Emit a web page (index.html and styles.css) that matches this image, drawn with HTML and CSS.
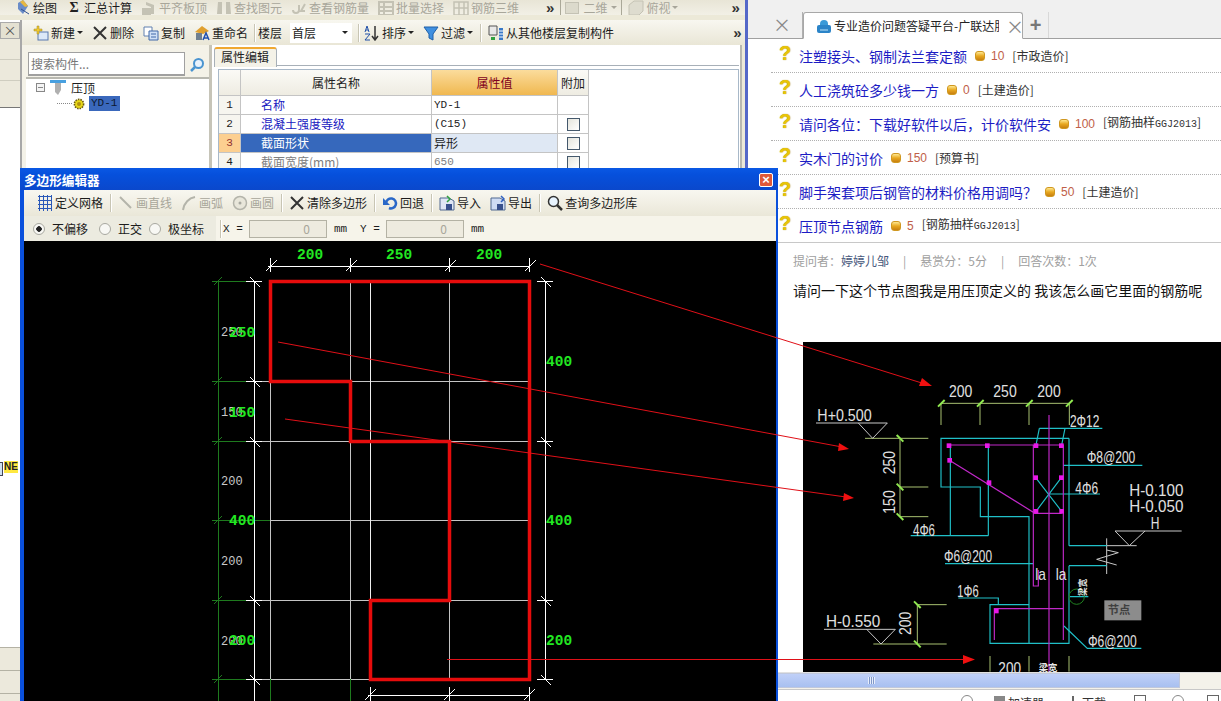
FILE: index.html
```html
<!DOCTYPE html>
<html lang="zh">
<head>
<meta charset="utf-8">
<title>多边形编辑器</title>
<link rel="stylesheet" href="styles.css">
</head>
<body>
<div class="screen">

<section class="app">
  <div class="bar top-bar">
    <span class="tool"><svg class="ico" viewBox="0 0 16 16"><path d="M3 3l5-3 5 6-5 8-5-5z" fill="#6a8cc8"/><path d="M8 0l5 6-3 1-5-5z" fill="#e8b840"/><path d="M6 9l8 5" stroke="#305090"/></svg>绘图</span>
    <span class="tool"><span class="sigma">Σ</span>汇总计算</span>
    <span class="tool off"><svg class="ico" viewBox="0 0 16 16"><path d="M1 8h9v7H1zM5 2l8 3v9h-3V7L5 5z" fill="#c4c2b4"/></svg>平齐板顶</span>
    <span class="tool off"><svg class="ico" viewBox="0 0 16 16"><path d="M2 2h4v12H1zM10 2h4l1 12h-5z" fill="#c4c2b4"/></svg>查找图元</span>
    <span class="tool off"><svg class="ico" viewBox="0 0 16 16"><path d="M2 10a3 3 0 1 0 6 0M8 10V5M14 4l-4 7h4" fill="none" stroke="#c4c2b4" stroke-width="2"/></svg>查看钢筋量</span>
    <span class="tool off"><svg class="ico" viewBox="0 0 16 16"><path d="M1 2h14v13H1zM1 7h14M1 11h14M6 2v13" fill="none" stroke="#c4c2b4" stroke-width="2"/></svg>批量选择</span>
    <span class="tool off"><svg class="ico" viewBox="0 0 16 16"><path d="M1 2h14v13H1zM1 8h14M6 2v13M11 2v13" fill="none" stroke="#c4c2b4" stroke-width="1.500"/></svg>钢筋三维</span>
    <span class="more more-a">»</span>
    <span class="view-combo"><i class="swatch"></i>二维<i class="caret off-caret"></i></span>
    <span class="tool off view-tool"><svg class="ico" viewBox="0 0 16 16"><path d="M1 5l5-4h9v10l-4 4H1z" fill="#dedccf" stroke="#c4c2b4"/></svg>俯视<i class="caret off-caret"></i></span>
    <span class="more more-b">»</span>
  </div>
  <div class="app-body">
    <aside class="dock">
      <div class="dock-head"><span>×</span></div>
      <div class="dock-band"></div>
      <div class="dock-band"></div>
      <div class="dock-band tall"></div>
      <div class="dock-white"><span class="ne-box"></span><span class="ne">NE</span></div>
      <div class="dock-foot"></div>
      <div class="dock-foot"></div>
      <div class="dock-foot short"></div>
    </aside>
    <div class="work">
      <div class="bar cmd-bar">
        <span class="tool"><svg class="ico" viewBox="0 0 16 16"><rect x="5" y="7" width="10" height="8" fill="#dce8f8" stroke="#5878b0"/><path d="M1 4h3V1h2v3h3v2H6v3H4V6H1z" fill="#f0c830" stroke="#a08820" stroke-width=".5"/></svg>新建<i class="caret"></i></span>
        <span class="tool"><svg class="ico" viewBox="0 0 16 16"><path d="M2 2l12 12M14 2L2 14" stroke="#333" stroke-width="2"/></svg>删除</span>
        <span class="tool"><svg class="ico" viewBox="0 0 16 16"><path d="M1 2h8v9H1z" fill="#fff" stroke="#6080b0"/><path d="M6 6h9v9H6z" fill="#cfe0f6" stroke="#4068a8"/><path d="M8 9h5M8 12h5" stroke="#4068a8"/></svg>复制</span>
        <span class="tool"><svg class="ico" viewBox="0 0 16 16"><path d="M1 7l7-6 7 5-6 3z" fill="#e0a030"/><path d="M2 8h6v7H2z" fill="#708090"/><path d="M9 15l3-7 3 7M10 13h4" fill="none" stroke="#2050b0" stroke-width="1.500"/></svg>重命名</span>
        <i class="sep before-label"></i>
        <span class="label">楼层</span>
        <span class="floor">首层<i class="caret"></i></span>
        <i class="sep tight"></i>
        <span class="tool"><svg class="ico" viewBox="0 0 16 16"><path d="M1 7l2-6 2 6M2 5h2M1 9h5l-5 6h5" fill="none" stroke="#2050a8"/><path d="M11 1v13M8 11l3 4 3-4" fill="none" stroke="#333" stroke-width="1.500"/></svg>排序<i class="caret"></i></span>
        <span class="tool"><svg class="ico" viewBox="0 0 16 16"><path d="M1 2h14l-5 7v6l-4-2V9z" fill="#4090e0" stroke="#2060a8"/></svg>过滤<i class="caret"></i></span>
        <i class="sep"></i>
        <span class="tool"><svg class="ico" viewBox="0 0 16 16"><path d="M1 1h8v9H1z" fill="#e8e8e8" stroke="#555"/><path d="M3 12h4v3H3z" fill="#30a040"/><path d="M11 3h4v12h-4z" fill="#3878c8"/><path d="M11 6h4M11 9h4M11 12h4" stroke="#fff"/></svg>从其他楼层复制构件</span>
        <span class="more more-c">»</span>
      </div>
      <div class="panes">
        <div class="comp">
          <div class="search">
            <span class="search-input">搜索构件...</span>
            <span class="search-btn"><svg class="ico" viewBox="0 0 16 16"><circle cx="9.500" cy="6.500" r="4.500" fill="#e8f2fc" stroke="#4a94d0" stroke-width="2"/><path d="M6 10l-4 4" stroke="#4a94d0" stroke-width="2.500"/></svg></span>
          </div>
          <div class="tree">
            <div class="tree-row root">
              <span class="minus"></span>
              <svg class="ico" viewBox="0 0 16 16"><path d="M0 0h16v3H0z" fill="#48a0e0"/><path d="M5 3h6v7l-3 5-3-3z" fill="#b0b0b0"/></svg>
              <span>压顶</span>
            </div>
            <div class="tree-row leaf">
              <i class="dots"></i>
              <svg class="gear" viewBox="0 0 12 12"><circle cx="6" cy="6" r="4.600" fill="#e8d818" stroke="#6a5a10" stroke-width="1.600" stroke-dasharray="1.500 1"/><circle cx="6" cy="6" r="2" fill="#b09010"/></svg>
              <span class="picked">YD-1</span>
            </div>
          </div>
        </div>
        <div class="props">
          <div class="prop-tabs"><span class="prop-tab">属性编辑</span></div>
          <div class="prop-frame">
            <div class="grid">
              <div class="c head"></div><div class="c head name-h">属性名称</div><div class="c head value-h">属性值</div><div class="c head">附加</div>
              <div class="c num">1</div><div class="c name">名称</div><div class="c mono">YD-1</div><div class="c"></div>
              <div class="c num">2</div><div class="c name">混凝土强度等级</div><div class="c mono">(C15)</div><div class="c"><i class="check"></i></div>
              <div class="c num cur">3</div><div class="c name sel">截面形状</div><div class="c val-sel">异形</div><div class="c"><i class="check"></i></div>
              <div class="c num">4</div><div class="c name dim">截面宽度(mm)</div><div class="c mono dim">650</div><div class="c"><i class="check"></i></div>
            </div>
          </div>
        </div>
      </div>
    </div>
  </div>
</section>

<section class="browser">
  <div class="tab-top"></div>
  <div class="tabs">
    <span class="tab-off">×</span>
    <span class="tab-on">
      <svg class="fav" viewBox="0 0 16 16"><path d="M4 6a4 4 0 0 1 8 0v1H4z" fill="#3a9ad8"/><rect x="1" y="7" width="14" height="8" rx="2" fill="#2b84c8"/><path d="M4 12h8" stroke="#bfe4f8"/></svg>
      <span class="tab-title">专业造价问题答疑平台-广联达服务新干线</span>
      <span class="tab-x">×</span>
    </span>
    <span class="tab-plus">+</span>
  </div>
  <div class="qlist">
    <div class="q"><i class="qm">?</i><a class="qt">注塑接头、钢制法兰套定额</a><i class="coin"></i><span class="pts">10</span><span class="cat">[市政造价]</span></div>
    <div class="q"><i class="qm">?</i><a class="qt">人工浇筑砼多少钱一方</a><i class="coin"></i><span class="pts">0</span><span class="cat">[土建造价]</span></div>
    <div class="q"><i class="qm">?</i><a class="qt">请问各位：下载好软件以后，计价软件安</a><i class="coin"></i><span class="pts">100</span><span class="cat">[钢筋抽样<span class="latin">GGJ2013</span>]</span></div>
    <div class="q"><i class="qm">?</i><a class="qt">实木门的讨价</a><i class="coin"></i><span class="pts">150</span><span class="cat">[预算书]</span></div>
    <div class="q"><i class="qm">?</i><a class="qt">脚手架套项后钢管的材料价格用调吗？</a><i class="coin"></i><span class="pts">50</span><span class="cat">[土建造价]</span></div>
    <div class="q last"><i class="qm">?</i><a class="qt">压顶节点钢筋</a><i class="coin"></i><span class="pts">5</span><span class="cat">[钢筋抽样<span class="latin">GGJ2013</span>]</span></div>
  </div>
  <div class="meta">提问者：<b>婷婷儿邹</b><i>|</i>悬赏分：5分<i>|</i>回答次数：1次</div>
  <p class="question">请问一下这个节点图我是用压顶定义的 我该怎么画它里面的钢筋呢</p>
  <svg class="node" viewBox="9 -84 1254 990" font-family="Liberation Sans, sans-serif">
    <rect x="9" y="-84" width="1254" height="990" fill="#000"/>
    <g fill="none" stroke="#a8c070" stroke-width="3">
      <path d="M423 100H808M423 100v65M540 100v65M687 100v65M808 100v65"/>
      <path d="M195 205H385M300 205V440M300 351H385M300 440H385"/>
      <path d="M352 704V822M352 704H440M220 822H440"/>
      <path d="M570 858V905M687 858V905M807 858V905"/>
    </g>
    <g stroke="#90e850" stroke-width="6">
      <path d="M414 110L434 90M531 110L551 90M678 110L698 90M798 110L818 90"/>
      <path d="M290 195L310 215M290 341L310 361M290 430L310 450M342 694L362 714M342 812L362 832"/>
    </g>
    <g fill="none" stroke="#c8c8c8" stroke-width="3">
      <path d="M48 159H262L218 205L175 159M72 778H286L243 822L200 778"/>
      <path d="M945 483H1145M945 483L988 527L1035 483M920 527H1010M920 505V612M920 540L955 548L890 568L950 585"/>
    </g>
    <g fill="none" stroke="#20c0c8" stroke-width="3.500">
      <path d="M920 527H807M807 205H423V351H541V440H687V820H570V704H687M807 205V527M807 587V820H687M807 587H920"/>
      <path d="M451 225V497M565 225V497M332 497H565M718 175H907M718 175L708 225M795 175L785 225M790 286H1027M745 372H900M707 323L785 424M784 323L708 424M435 581H700M475 684H595V704M792 768L862 835H1024M810 680H865"/>
    </g>
    <g fill="none" stroke="#c028c8" stroke-width="3.500">
      <path d="M447 225H790V810M700 225V648H715V600M447 270L705 430H785M583 810V716H792M747 135V905"/>
    </g>
    <circle cx="830" cy="680" r="23" fill="none" stroke="#208020" stroke-width="3"/>
    <g fill="#e818e8">
      <rect x="440" y="220" width="14" height="14"/><rect x="555" y="220" width="14" height="14"/><rect x="701" y="220" width="14" height="14"/><rect x="777" y="220" width="14" height="14"/><rect x="442" y="264" width="14" height="14"/><rect x="560" y="331" width="14" height="14"/><rect x="700" y="316" width="14" height="14"/><rect x="777" y="316" width="14" height="14"/><rect x="701" y="417" width="14" height="14"/><rect x="778" y="417" width="14" height="14"/><rect x="582" y="716" width="14" height="14"/>
    </g>
    <g fill="#e0e0e0" font-size="51">
      <text x="447" y="82" textLength="70" lengthAdjust="spacingAndGlyphs">200</text>
      <text x="580" y="82" textLength="70" lengthAdjust="spacingAndGlyphs">250</text>
      <text x="712" y="82" textLength="70" lengthAdjust="spacingAndGlyphs">200</text>
      <text x="52" y="152" textLength="163" lengthAdjust="spacingAndGlyphs">H+0.500</text>
      <text x="810" y="172" textLength="88" lengthAdjust="spacingAndGlyphs">2Φ12</text>
      <text x="860" y="279" textLength="146" lengthAdjust="spacingAndGlyphs">Φ8@200</text>
      <text x="826" y="371" textLength="68" lengthAdjust="spacingAndGlyphs">4Φ6</text>
      <text x="988" y="377" textLength="162" lengthAdjust="spacingAndGlyphs">H-0.100</text>
      <text x="988" y="427" textLength="162" lengthAdjust="spacingAndGlyphs">H-0.050</text>
      <text x="1052" y="477" textLength="26" lengthAdjust="spacingAndGlyphs">H</text>
      <text x="339" y="497" textLength="66" lengthAdjust="spacingAndGlyphs">4Φ6</text>
      <text x="432" y="576" textLength="144" lengthAdjust="spacingAndGlyphs">Φ6@200</text>
      <text x="706" y="631" textLength="32" lengthAdjust="spacingAndGlyphs">la</text>
      <text x="767" y="631" textLength="32" lengthAdjust="spacingAndGlyphs">la</text>
      <text x="472" y="681" textLength="64" lengthAdjust="spacingAndGlyphs">1Φ6</text>
      <text x="78" y="771" textLength="163" lengthAdjust="spacingAndGlyphs">H-0.550</text>
      <text x="864" y="831" textLength="146" lengthAdjust="spacingAndGlyphs">Φ6@200</text>
      <text x="595" y="911" textLength="68" lengthAdjust="spacingAndGlyphs">200</text>
      <text transform="translate(286 313) rotate(-90)" textLength="70" lengthAdjust="spacingAndGlyphs">250</text>
      <text transform="translate(286 431) rotate(-90)" textLength="70" lengthAdjust="spacingAndGlyphs">150</text>
      <text transform="translate(334 795) rotate(-90)" textLength="70" lengthAdjust="spacingAndGlyphs">200</text>
    </g>
    <text class="cjk" x="716" y="902" font-size="28" font-weight="700" fill="#e8e8e8">梁宽</text>
    <text class="cjk" transform="translate(858 678) rotate(-90)" font-size="26" font-weight="700" fill="#e8e8e8">梁宽</text>
    <rect x="913" y="691" width="111" height="60" fill="#8c8c8c"/>
    <text class="cjk" x="923" y="732" font-size="34" font-weight="700" fill="#404040">节点</text>
  </svg>
  <div class="hscroll"><div class="thumb"><span class="grip"></span></div></div>
  <div class="status">
    <i class="st-circle"></i><span class="st-send"></span><span>加速器</span><span class="st-up"></span><span class="st-dl">下载</span><i class="st-box"></i><i class="st-circle c2"></i><i class="st-box b2"></i>
  </div>
</section>

<section class="dialog">
  <header class="dlg-title"><b>多边形编辑器</b><span class="dlg-x">×</span></header>
  <div class="bar dlg-tools">
    <span class="tool"><svg class="ico" viewBox="0 0 16 16"><path d="M1 1.500h14M1 5.500h14M1 9.500h14M1 13.500h14M2.500 0v16M6.500 0v16M10.500 0v16M14.500 0v16" stroke="#2a58b8"/></svg>定义网格</span>
    <i class="sep"></i>
    <span class="tool off"><svg class="ico" viewBox="0 0 16 16"><path d="M2 2l11 11" stroke="#b4b4aa" stroke-width="2"/></svg>画直线</span>
    <span class="tool off"><svg class="ico" viewBox="0 0 16 16"><path d="M2 15C3 8 8 3 14 2" fill="none" stroke="#b4b4aa" stroke-width="2"/></svg>画弧</span>
    <span class="tool off"><svg class="ico" viewBox="0 0 16 16"><circle cx="8" cy="8" r="6.500" fill="#e8e6da" stroke="#b4b4aa" stroke-width="1.500"/><circle cx="8" cy="8" r="1.500" fill="#a8a8a0"/></svg>画圆</span>
    <i class="sep"></i>
    <span class="tool"><svg class="ico" viewBox="0 0 16 16"><path d="M2 2l12 12M14 2L2 14" stroke="#333" stroke-width="2"/></svg>清除多边形</span>
    <i class="sep"></i>
    <span class="tool"><svg class="ico" viewBox="0 0 16 16"><path d="M4 8a5 5 0 1 1 3 5" fill="none" stroke="#2a68c8" stroke-width="2.500"/><path d="M1 3v7h7z" fill="#2a68c8"/></svg>回退</span>
    <i class="sep"></i>
    <span class="tool"><svg class="ico" viewBox="0 0 16 16"><path d="M1 3h9l5 3v9H1z" fill="#dfe6f4" stroke="#506890"/><path d="M7 9h6v6H7z" fill="#38508c"/><path d="M8 1l3 3-3 3" fill="none" stroke="#30a040" stroke-width="1.500"/></svg>导入</span>
    <span class="tool"><svg class="ico" viewBox="0 0 16 16"><path d="M1 3h9l5 3v9H1z" fill="#cfdcf4" stroke="#506890"/><path d="M7 9h6v6H7z" fill="#38508c"/><path d="M11 1l3 3-3 3" fill="none" stroke="#3060c0" stroke-width="1.500"/></svg>导出</span>
    <i class="sep"></i>
    <span class="tool"><svg class="ico" viewBox="0 0 16 16"><circle cx="6.500" cy="6.500" r="5" fill="#e8f4ff" stroke="#333" stroke-width="1.500"/><path d="M10 10l5 5" stroke="#333" stroke-width="2.500"/></svg>查询多边形库</span>
  </div>
  <div class="bar dlg-opts">
    <div class="modes">
      <span class="radio on"></span><span>不偏移</span>
      <span class="radio r2"></span><span>正交</span>
      <span class="radio"></span><span>极坐标</span>
    </div>
    <i class="sep opt-sep"></i>
    <span class="mono axis">X =</span>
    <span class="spin"><span>0</span><i class="spin-btn"></i></span>
    <span class="mono unit">mm</span>
    <span class="mono axis y">Y =</span>
    <span class="spin"><span>0</span><i class="spin-btn"></i></span>
    <span class="mono unit">mm</span>
  </div>
  <svg class="cad" viewBox="24 241 752 460">
    <rect x="24" y="241" width="752" height="460" fill="#000"/>
    <g stroke="#c4c4c4" fill="none" shape-rendering="crispEdges">
      <path d="M270.500 281V679M350.500 281V679M449.500 281V679M529.500 281V679"/>
      <path d="M262 381.500H530M262 441.500H530M270 520.500H530M262 600.500H530M262 679.500H530"/>
      <path d="M370.500 281V679" stroke="#eee"/>
    </g>
    <g stroke="#1e7a1e" fill="none">
      <path d="M218.500 281V701M212 281.500H246M212 381.500H246M212 441.500H246M212 520.500H270M212 600.500H246M212 679.500H246"/>
      <path d="M214 285l8-8M214 385l8-8M214 445l8-8M214 524l8-8M214 604l8-8M214 683l8-8"/>
      <path d="M270.500 679V701M350.500 679V701"/>
    </g>
    <g stroke="#fff" fill="none">
      <path d="M268 266.500H530M270.500 258V272M350.500 258V272M449.500 258V272M529.500 258V272"/>
      <path d="M266 271L277 260M346 271L357 260M445 271L456 260M525 271L536 260"/>
      <path d="M254.500 281V701M545.500 281V679"/>
      <path d="M246 281.500H262M246 381.500H262M246 441.500H262M246 600.500H262M246 679.500H262"/>
      <path d="M250 277L260 287M250 377L260 387M250 437L260 447M250 596L260 606M250 675L260 685"/>
      <path d="M537 281.500H553M537 441.500H553M537 600.500H553M537 679.500H553"/>
      <path d="M541 277L551 287M541 437L551 447M541 596L551 606M541 675L551 685"/>
      <path d="M368 695.500H530M370.500 687V701M449.500 687V701M529.500 687V701"/>
      <path d="M365 700L376 689M444 700L455 689M524 700L535 689"/>
    </g>
    <path class="poly" d="M270.500 281.500H529.500V679.500H370.500V600.500H449.500V441.500H350.500V381.500H270.500Z"/>
    <g class="dim-s">
      <text x="221" y="336">250</text><text x="221" y="416">150</text><text x="221" y="485">200</text><text x="221" y="565">200</text><text x="221" y="645">200</text>
    </g>
    <g class="dim-l">
      <text x="297" y="259">200</text><text x="386" y="259">250</text><text x="476" y="259">200</text>
      <text x="229" y="337">250</text><text x="229" y="417">150</text><text x="229" y="525">400</text><text x="229" y="645">200</text>
      <text x="546" y="366">400</text><text x="546" y="525">400</text><text x="546" y="645">200</text>
    </g>
  </svg>
</section>

<svg class="arrows" viewBox="0 0 1221 701">
  <g stroke="#e01018" fill="none">
    <path d="M540 264L925 384M278 342L842 447M285 419L846 497M447 659.500H966"/>
  </g>
  <g fill="#f01010">
    <path d="M932 386L919 386L922 378Z"/>
    <path d="M849 449L838 451L839 443Z"/>
    <path d="M854 498L843 501L844 493Z"/>
    <path d="M975 659.500L963 664L963 655Z"/>
  </g>
</svg>

</div>
</body>
</html>
```

FILE: styles.css
```css
* { box-sizing: border-box; }
html, body { margin: 0; padding: 0; background: #fff; }
body { font: 12px/16px "Noto Sans CJK SC", "Liberation Sans", sans-serif; color: #1c1c1c; }
i { font-style: normal; }
.screen { position: relative; width: 1221px; height: 701px; overflow: hidden; background: #fff; }

/* windows on the desktop */
.app { position: absolute; left: 0; top: 0; width: 745px; height: 701px; background: #ece9d8; display: flex; flex-direction: column; }
.browser { position: absolute; left: 745px; top: 0; width: 476px; height: 701px; border-left: 3px solid #5468c8; background: #fff; display: flex; flex-direction: column; }
.dialog { position: absolute; left: 20px; top: 168px; width: 758px; height: 533px; background: #0a50dc; padding: 0 2px 0 4px; display: flex; flex-direction: column; }
.arrows { position: absolute; left: 0; top: 0; width: 1221px; height: 701px; pointer-events: none; }

/* toolbars */
.bar { display: flex; align-items: center; white-space: nowrap; }
.tool { display: inline-flex; align-items: center; gap: 2px; flex: none; }
.tool + .tool { margin-left: 9px; }
.ico { width: 16px; height: 16px; flex: none; display: block; }
.off { color: #a8a69a; }
.sep { width: 2px; height: 18px; margin: 0 6px 0 7px; flex: none; border-left: 1px solid #c8c5b4; border-right: 1px solid #fff; }
.sep.before-label { margin: 0 2px 0 6px; }
.sep.tight { margin: 0 4px 0 6px; }
.caret { width: 0; height: 0; border: 3px solid transparent; border-top: 3px solid #222; border-bottom: 0; flex: none; }
.off-caret { border-top-color: #a8a69a; }
.sigma { width: 16px; text-align: center; font: 700 14px/15px "Liberation Serif", serif; color: #222; }
.more { color: #333; font: 700 15px/12px "Liberation Sans", sans-serif; flex: none; }

.top-bar { height: 15px; padding-left: 15px; overflow: hidden; background: linear-gradient(#e8e5d6, #f2f0e6); }
.more-a { margin-left: 27px; }
.view-combo { display: inline-flex; align-items: center; gap: 4px; width: 62px; height: 17px; margin-left: 6px; padding-left: 4px; border: 1px solid #aaa898; color: #a8a69a; flex: none; }
.swatch { width: 14px; height: 12px; background: #dcdacc; border: 1px solid #c4c2b4; flex: none; }
.view-tool { margin-left: 6px; }
.more-b { margin-left: 53px; }

.app-body { flex: 1; display: flex; min-height: 0; border-top: 5px solid #ece9d8; }
.dock { width: 22px; flex: none; display: flex; flex-direction: column; border-right: 2px solid #a8a8a8; background: #fff; }
.dock-head { height: 17px; margin-top: 2px; background: #e4e1d2; border: 1px solid #aaa; text-align: center; font-size: 13px; line-height: 14px; color: #555; }
.dock-band { height: 21px; background: #ece9dc; border-bottom: 1px solid #cfcdc0; }
.dock-band.tall { height: 27px; border-bottom: 1px solid #777; }
.dock-white { flex: 1; background: #fff; position: relative; }
.ne-box { position: absolute; left: 0; top: 354px; width: 3px; height: 14px; background: #cfe0f0; border: 1px solid #445; border-left: 0; }
.ne { position: absolute; left: 4px; top: 353px; font: 700 10px/12px "Liberation Sans", sans-serif; color: #222; background: #ffe840; }
.dock-foot { height: 23px; background: #ece9dc; border-top: 1px solid #b4b2a4; flex: none; }
.dock-foot.short { height: 8px; }

.work { flex: 1; min-width: 0; display: flex; flex-direction: column; }
.cmd-bar { height: 25px; padding-left: 11px; flex: none; position: relative; background: linear-gradient(#f8f7f0, #e9e6d6); }
.label { flex: none; }
.floor { width: 62px; height: 20px; margin-left: 8px; padding-left: 2px; display: flex; align-items: center; justify-content: space-between; padding-right: 4px; background: #fff; flex: none; }
.more-c { margin-left: 119px; }

.panes { flex: 1; display: flex; min-height: 0; background: #ece9d8; }
.comp { width: 190px; flex: none; padding: 7px 0 0 4px; border-right: 3px solid #c6c4b8; background: #f4f2e8; display: flex; flex-direction: column; }
.search { height: 25px; display: flex; flex: none; padding-left: 2px; }
.search-input { width: 157px; height: 24px; padding-left: 2px; border: 1px solid #a0a0a0; border-bottom: 2px solid #a0a0a0; background: #fff; color: #777; line-height: 21px; }
.search-btn { width: 24px; display: flex; align-items: center; justify-content: center; }
.tree { flex: 1; background: #fff; border-top: 2px solid #b8b8b0; padding-top: 1px; }
.tree-row { display: flex; align-items: center; height: 15px; white-space: nowrap; }
.root { padding-left: 10px; gap: 5px; }
.minus { width: 9px; height: 9px; border: 1px solid #888; background: linear-gradient(#888, #888) center / 5px 1px no-repeat #f4f4f4; }
.leaf { padding-left: 31px; margin-top: 1px; }
.dots { width: 15px; height: 1px; border-top: 1px dotted #888; flex: none; margin-right: 1px; }
.gear { width: 12px; height: 12px; flex: none; }
.picked { margin-left: 4px; width: 31px; height: 15px; background: #3a68bc; color: #0c1830; font: 11px/15px "Liberation Mono", monospace; padding-left: 2px; }

.props { flex: 1; min-width: 0; padding: 2px 1px 0 2px; background: #fff; display: flex; flex-direction: column; border-right: 2px solid #b8b8b0; margin-right: 3px; }
.prop-tabs { height: 19px; flex: none; border-bottom: 1px solid #a8b0b8; }
.prop-tab { display: block; width: 63px; height: 20px; padding-left: 6px; background: #f4f2e8; border: 1px solid #a8b0b8; border-top: 2px solid #f0a830; border-bottom: 0; border-radius: 3px 3px 0 0; line-height: 15px; color: #222; }
.prop-frame { flex: 1; margin: 3px 0 0 4px; border: 1px solid #a8b8c8; }
.grid { display: grid; grid-template-columns: 22px 191px 126px 31px; grid-template-rows: 26px repeat(4, 19px); font-size: 12px; }
.c { border-right: 1px solid #c4c4c4; border-bottom: 1px solid #c4c4c4; display: flex; align-items: center; justify-content: center; min-width: 0; overflow: hidden; white-space: nowrap; }
.head { background: linear-gradient(#fbfaf6, #eeece2); }
.name-h { background: linear-gradient(#fbfaf6, #eeece2); }
.value-h { background: linear-gradient(#fbdc9c, #f0b850); color: #800020; }
.num { background: #f6f5ef; font: 11px/16px "Liberation Mono", monospace; }
.num.cur { background: #fccf90; color: #903030; }
.name { justify-content: flex-start; padding-left: 20px; color: #1818c0; }
.name.sel { background: #3668bc; color: #fff; }
.name.dim, .mono.dim { color: #808080; }
.c.mono { justify-content: flex-start; padding-left: 2px; font: 11px/16px "Liberation Mono", monospace; }
.val-sel { justify-content: flex-start; padding-left: 2px; background: #dfe8f4; }
.check { width: 13px; height: 13px; border: 1px solid #44586c; background: linear-gradient(135deg, #e4e4dc, #fff); }

/* browser */
.tab-top { height: 12px; flex: none; background: #f0f0f0; }
.tabs { height: 27px; flex: none; display: flex; background: #f0f0f0; border-bottom: 1px solid #a0a0a0; }
.tab-off { width: 55px; flex: none; text-align: right; padding: 2px 11px 0 0; font-size: 18px; line-height: 20px; color: #888; border-right: 1px solid #b0b0b0; }
.tab-on { width: 220px; flex: none; display: flex; align-items: center; padding: 0 6px 0 12px; background: #fff; border: 1px solid #a8a8a8; border-bottom: 1px solid #fff; border-radius: 3px 3px 0 0; height: 27px; }
.fav { width: 16px; height: 16px; flex: none; }
.tab-title { width: 165px; margin-left: 2px; overflow: hidden; white-space: nowrap; flex: none; color: #222; }
.tab-x { margin-left: 7px; font-size: 18px; color: #888; }
.tab-plus { width: 26px; flex: none; border-right: 1px solid #d8d8d8; text-align: center; font: 700 20px/26px "Liberation Sans", sans-serif; color: #777; }
.qlist { flex: none; padding-left: 23px; }
.q { height: 34px; display: flex; align-items: center; border-bottom: 1px dotted #b0b0b0; white-space: nowrap; padding-left: 28px; position: relative; }
.q.last { border-bottom: 1px solid #c8c8c8; }
.qm { position: absolute; left: 8px; top: 4px; font: 700 20px/20px "Liberation Sans", sans-serif; color: #e8c408; text-shadow: 0 0 1px #a88800; }
.qt { color: #1c1cc4; font-size: 14px; line-height: 20px; }
.coin { width: 10px; height: 10px; margin-left: 8px; border-radius: 3px; background: linear-gradient(#ffe890, #e8a820 50%, #c88010); border: 1px solid #d09820; flex: none; }
.pts { margin-left: 6px; color: #c06048; font: 12px/16px "Liberation Sans", sans-serif; }
.cat { margin-left: 8px; color: #333; font-size: 12px; }
.latin { font: 10px/16px "Liberation Mono", monospace; }
.meta { flex: none; height: 34px; padding: 10px 0 0 45px; color: #a0a0a0; white-space: nowrap; }
.meta b { font-weight: 400; color: #48587c; }
.meta i { margin: 0 14px; }
.question { flex: none; height: 65px; margin: 0; padding: 3px 0 0 45px; font-size: 14px; line-height: 20px; color: #111; white-space: nowrap; }
.node { flex: none; width: 418px; height: 330px; margin-left: 55px; display: block; }
.node text.cjk { font-family: "Noto Sans CJK SC", sans-serif; }
.hscroll { height: 17px; flex: none; background: #f4f2ea; border-top: 1px solid #e0e0e0; }
.thumb { width: 432px; height: 15px; background: linear-gradient(#c0d0f8, #a8c0f0); border: 1px solid #c0c8dc; border-left: 0; display: flex; align-items: center; padding-left: 120px; }
.grip { width: 7px; height: 7px; background: repeating-linear-gradient(90deg, #e8eefc 0 1px, #8098c8 1px 2px); }
.status { flex: 1; min-height: 0; overflow: hidden; display: flex; padding: 5px 0 0 213px; background: #fff; border-top: 1px solid #c8c8c8; font-size: 12px; line-height: 16px; white-space: nowrap; color: #333; }
.st-circle { width: 12px; height: 12px; border: 1px solid #888; border-radius: 50%; flex: none; }
.st-send { width: 11px; height: 8px; margin: 1px 3px 0 21px; background: #888; flex: none; }
.st-up { width: 2px; height: 10px; margin: 1px 0 0 28px; background: #666; flex: none; }
.st-dl { margin-left: 8px; }
.st-box { width: 12px; height: 12px; margin-left: 28px; border: 1px solid #666; flex: none; }
.c2 { margin-left: 26px; }
.b2 { margin-left: 23px; }

/* dialog */
.dlg-title { height: 22px; flex: none; margin: 0 -2px 0 -4px; padding: 2px 5px 0 4px; display: flex; align-items: center; justify-content: space-between; background: linear-gradient(#0a58e4, #0650dc 30%, #0a48cc); color: #fff; }
.dlg-title b { font-size: 12.600px; font-weight: 700; }
.dlg-x { width: 14px; height: 14px; background: #e05838; border: 1px solid #fff; border-radius: 2px; color: #fff; font: 700 13px/11px "Liberation Sans", sans-serif; text-align: center; }
.dlg-tools { height: 26px; flex: none; padding-left: 13px; background: linear-gradient(#f8f7f0, #eae7d8); }
.dlg-opts { height: 25px; flex: none; background: #f6f4ea; }
.modes { width: 192px; height: 100%; padding-left: 9px; display: flex; align-items: center; gap: 7px; background: #ecebe0; flex: none; }
.radio { width: 12px; height: 12px; border: 1px solid #a8a8a0; border-radius: 50%; background: #f8f8f4; flex: none; }
.radio.on { background: radial-gradient(circle, #222 0 2.500px, #f8f8f4 3px); }
.radio.r2 { margin-left: 4px; }
.opt-sep { margin: 0 1px 0 4px; }
.mono { font: 11px/16px "Liberation Mono", monospace; }
.axis { width: 26px; flex: none; }
.axis.y { width: 26px; margin-left: 6px; }
.spin { width: 78px; height: 18px; flex: none; display: flex; align-items: center; justify-content: flex-end; border: 1px solid #b4b2a4; background: #eeebdf; color: #a8a69a; padding-right: 2px; gap: 5px; }
.spin-btn { width: 9px; height: 14px; background: linear-gradient(#eeebdf 40%, #a8a69a 40% 46%, #eeebdf 46%); flex: none; }
.unit { width: 20px; margin-left: 7px; flex: none; }
.cad { flex: 1; width: 752px; height: 460px; display: block; min-height: 0; }
.poly { fill: none; stroke: #e60c0c; stroke-width: 3.500; stroke-linejoin: miter; }
.dim-s text { font: 12px "Liberation Mono", monospace; fill: #c8c8c8; }
.dim-l text { font: 700 14.500px "Liberation Mono", monospace; fill: #22e822; }
```
